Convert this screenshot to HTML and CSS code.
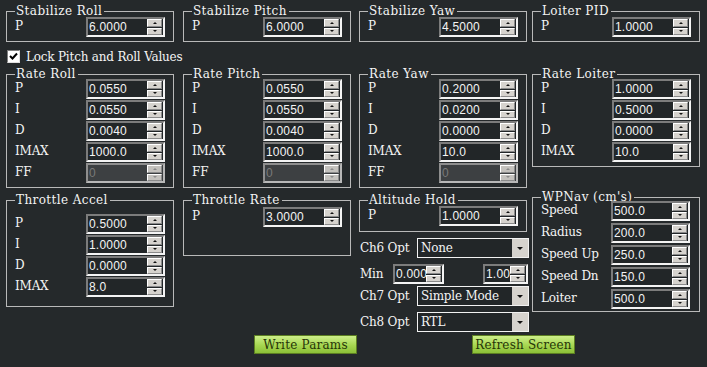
FILE: index.html
```html
<!DOCTYPE html>
<html lang="en">
<head>
    <meta charset="UTF-8">
    <title>Arducopter Config</title>
    <link rel="stylesheet" href="styles.css">
</head>
<body>
    <div class="panel">
        <!-- stabilize row -->
        <fieldset class="grp top">
            <legend>Stabilize Roll</legend>
            <div class="row"><span class="lbl">P</span><div class="spin"><span class="val">6.0000</span><span class="btns"><i class="up"></i><i class="dn"></i></span></div></div>
        </fieldset>
        <fieldset class="grp top">
            <legend>Stabilize Pitch</legend>
            <div class="row"><span class="lbl">P</span><div class="spin"><span class="val">6.0000</span><span class="btns"><i class="up"></i><i class="dn"></i></span></div></div>
        </fieldset>
        <fieldset class="grp top">
            <legend>Stabilize Yaw</legend>
            <div class="row"><span class="lbl">P</span><div class="spin"><span class="val">4.5000</span><span class="btns"><i class="up"></i><i class="dn"></i></span></div></div>
        </fieldset>
        <fieldset class="grp top">
            <legend>Loiter PID</legend>
            <div class="row"><span class="lbl">P</span><div class="spin"><span class="val">1.0000</span><span class="btns"><i class="up"></i><i class="dn"></i></span></div></div>
        </fieldset>

        <label class="lock"><span class="check"><svg width="9" height="9" viewBox="0 0 9 9"><path d="M1 4 L3.5 6.5 L8 1.5" fill="none" stroke="#000" stroke-width="2"/></svg></span>Lock Pitch and Roll Values</label>

        <!-- rate row -->
        <fieldset class="grp rate">
            <legend>Rate Roll</legend>
            <div class="row"><span class="lbl">P</span><div class="spin"><span class="val">0.0550</span><span class="btns"><i class="up"></i><i class="dn"></i></span></div></div>
            <div class="row"><span class="lbl">I</span><div class="spin"><span class="val">0.0550</span><span class="btns"><i class="up"></i><i class="dn"></i></span></div></div>
            <div class="row"><span class="lbl">D</span><div class="spin"><span class="val">0.0040</span><span class="btns"><i class="up"></i><i class="dn"></i></span></div></div>
            <div class="row"><span class="lbl">IMAX</span><div class="spin"><span class="val">1000.0</span><span class="btns"><i class="up"></i><i class="dn"></i></span></div></div>
            <div class="row ff"><span class="lbl">FF</span><div class="spin off"><span class="val">0</span><span class="btns"><i class="up"></i><i class="dn"></i></span></div></div>
        </fieldset>
        <fieldset class="grp rate">
            <legend>Rate Pitch</legend>
            <div class="row"><span class="lbl">P</span><div class="spin"><span class="val">0.0550</span><span class="btns"><i class="up"></i><i class="dn"></i></span></div></div>
            <div class="row"><span class="lbl">I</span><div class="spin"><span class="val">0.0550</span><span class="btns"><i class="up"></i><i class="dn"></i></span></div></div>
            <div class="row"><span class="lbl">D</span><div class="spin"><span class="val">0.0040</span><span class="btns"><i class="up"></i><i class="dn"></i></span></div></div>
            <div class="row"><span class="lbl">IMAX</span><div class="spin"><span class="val">1000.0</span><span class="btns"><i class="up"></i><i class="dn"></i></span></div></div>
            <div class="row ff"><span class="lbl">FF</span><div class="spin off"><span class="val">0</span><span class="btns"><i class="up"></i><i class="dn"></i></span></div></div>
        </fieldset>
        <fieldset class="grp rate">
            <legend>Rate Yaw</legend>
            <div class="row"><span class="lbl">P</span><div class="spin"><span class="val">0.2000</span><span class="btns"><i class="up"></i><i class="dn"></i></span></div></div>
            <div class="row"><span class="lbl">I</span><div class="spin"><span class="val">0.0200</span><span class="btns"><i class="up"></i><i class="dn"></i></span></div></div>
            <div class="row"><span class="lbl">D</span><div class="spin"><span class="val">0.0000</span><span class="btns"><i class="up"></i><i class="dn"></i></span></div></div>
            <div class="row"><span class="lbl">IMAX</span><div class="spin"><span class="val">10.0</span><span class="btns"><i class="up"></i><i class="dn"></i></span></div></div>
            <div class="row ff"><span class="lbl">FF</span><div class="spin off"><span class="val">0</span><span class="btns"><i class="up"></i><i class="dn"></i></span></div></div>
        </fieldset>
        <fieldset class="grp rate">
            <legend>Rate Loiter</legend>
            <div class="row"><span class="lbl">P</span><div class="spin"><span class="val">1.0000</span><span class="btns"><i class="up"></i><i class="dn"></i></span></div></div>
            <div class="row"><span class="lbl">I</span><div class="spin"><span class="val">0.5000</span><span class="btns"><i class="up"></i><i class="dn"></i></span></div></div>
            <div class="row"><span class="lbl">D</span><div class="spin"><span class="val">0.0000</span><span class="btns"><i class="up"></i><i class="dn"></i></span></div></div>
            <div class="row"><span class="lbl">IMAX</span><div class="spin"><span class="val">10.0</span><span class="btns"><i class="up"></i><i class="dn"></i></span></div></div>
        </fieldset>

        <!-- lower row -->
        <fieldset class="grp accel">
            <legend>Throttle Accel</legend>
            <div class="row"><span class="lbl">P</span><div class="spin"><span class="val">0.5000</span><span class="btns"><i class="up"></i><i class="dn"></i></span></div></div>
            <div class="row"><span class="lbl">I</span><div class="spin"><span class="val">1.0000</span><span class="btns"><i class="up"></i><i class="dn"></i></span></div></div>
            <div class="row"><span class="lbl">D</span><div class="spin"><span class="val">0.0000</span><span class="btns"><i class="up"></i><i class="dn"></i></span></div></div>
            <div class="row"><span class="lbl">IMAX</span><div class="spin"><span class="val">8.0</span><span class="btns"><i class="up"></i><i class="dn"></i></span></div></div>
        </fieldset>
        <fieldset class="grp thr-rate">
            <legend>Throttle Rate</legend>
            <div class="row"><span class="lbl">P</span><div class="spin"><span class="val">3.0000</span><span class="btns"><i class="up"></i><i class="dn"></i></span></div></div>
        </fieldset>
        <div class="col3">
            <fieldset class="grp alt">
                <legend>Altitude Hold</legend>
                <div class="row"><span class="lbl">P</span><div class="spin"><span class="val">1.0000</span><span class="btns"><i class="up"></i><i class="dn"></i></span></div></div>
            </fieldset>
            <div class="opt ch6"><span class="olbl">Ch6 Opt</span><div class="combo"><span class="ctext">None</span><span class="drop"><i></i></span></div></div>
            <div class="opt min"><span class="olbl short">Min</span>
                <div class="spin sm"><span class="val">0.000</span><span class="btns"><i class="up"></i><i class="dn"></i></span></div>
                <div class="spin sm2"><span class="val">1.000</span><span class="btns"><i class="up"></i><i class="dn"></i></span></div>
            </div>
            <div class="opt ch7"><span class="olbl">Ch7 Opt</span><div class="combo"><span class="ctext">Simple Mode</span><span class="drop"><i></i></span></div></div>
            <div class="opt ch8"><span class="olbl">Ch8 Opt</span><div class="combo"><span class="ctext">RTL</span><span class="drop"><i></i></span></div></div>
        </div>
        <fieldset class="grp wpnav">
            <legend>WPNav (cm's)</legend>
            <div class="row"><span class="lbl">Speed</span><div class="spin"><span class="val">500.0</span><span class="btns"><i class="up"></i><i class="dn"></i></span></div></div>
            <div class="row"><span class="lbl">Radius</span><div class="spin"><span class="val">200.0</span><span class="btns"><i class="up"></i><i class="dn"></i></span></div></div>
            <div class="row"><span class="lbl">Speed Up</span><div class="spin"><span class="val">250.0</span><span class="btns"><i class="up"></i><i class="dn"></i></span></div></div>
            <div class="row"><span class="lbl">Speed Dn</span><div class="spin"><span class="val">150.0</span><span class="btns"><i class="up"></i><i class="dn"></i></span></div></div>
            <div class="row"><span class="lbl">Loiter</span><div class="spin"><span class="val">500.0</span><span class="btns"><i class="up"></i><i class="dn"></i></span></div></div>
        </fieldset>

        <div class="actions">
            <button class="btn">Write Params</button>
            <button class="btn">Refresh Screen</button>
        </div>
    </div>
</body>
</html>
```

FILE: styles.css
```css
body {
    margin: 0;
    background-color: #25292b;
    color: #f4f4f4;
    font-family: "DejaVu Serif", "Liberation Serif", serif;
    font-size: 12px;
    letter-spacing: -0.2px;
}

.panel {
    display: grid;
    grid-template-columns: 177px 176px 173px 168px;
    align-items: start;
    padding: 6px 0 0 6px;
}

/* group boxes */
.grp {
    margin: 0;
    width: 168px;
    box-sizing: border-box;
    border: 1px solid #b9b9b9;
    padding: 0 8px 4px;
    min-width: 0;
}

.grp legend {
    padding: 0 2px 0 1px;
    line-height: 10px;
    height: 10px;
    letter-spacing: 0.4px;
}

.top {
    padding-top: 1px;
}

.rate .row + .row {
    margin-top: 1px;
}

.rate .ff {
    margin-top: 4px;
}

.accel {
    margin-top: 7px;
    padding-top: 9px;
    padding-bottom: 9px;
}

.accel .row + .row {
    margin-top: 1px;
}

.thr-rate {
    margin-top: 7px;
    padding-top: 2px;
    padding-bottom: 28px;
}

.col3 {
    margin-top: 7px;
}

.alt {
    padding-top: 1px;
    padding-bottom: 5px;
}

.wpnav {
    margin-top: 4px;
    padding-bottom: 2px;
}

.wpnav .row:first-of-type {
    margin-top: -1px;
}

.wpnav .row + .row {
    margin-top: 2px;
}

.row {
    display: flex;
    align-items: center;
    height: 20px;
}

.lbl {
    width: 71px;
    flex: none;
    white-space: nowrap;
    margin-top: -2px;
}

.wpnav .lbl {
    width: 70px;
}

/* spin boxes */
.spin {
    display: flex;
    width: 79px;
    height: 20px;
    box-sizing: border-box;
    border: 2px solid;
    border-color: #7c7c7c #f4f4f4 #f4f4f4 #7c7c7c;
    background-color: #222628;
}

.spin .val {
    flex: 1;
    overflow: hidden;
    white-space: nowrap;
    padding-left: 1px;
    font-family: "Liberation Sans", Arial, sans-serif;
    font-size: 12px;
    letter-spacing: 0.2px;
    line-height: 16px;
    color: #f4f4f4;
}

.btns {
    display: flex;
    flex-direction: column;
    gap: 1px;
    width: 15px;
    flex: none;
    padding: 0 1px 0 0;
}

.btns i {
    flex: 1;
    display: flex;
    align-items: center;
    justify-content: center;
    background-color: #d6d3ce;
    border: 1px solid;
    border-color: #ffffff #8a8a8a #8a8a8a #ffffff;
}

.btns i::after {
    content: "";
    border-left: 2px solid transparent;
    border-right: 2px solid transparent;
}

.btns .up::after {
    border-bottom: 2px solid #111;
}

.btns .dn::after {
    border-top: 2px solid #111;
}

.spin.off {
    border-color: #8e8e8e #b8b8b8 #b8b8b8 #8e8e8e;
    background-color: #3d4042;
}

.spin.off .val {
    color: #7a7a7a;
}

.spin.off .btns i {
    background-color: #c4c2be;
}

.spin.off .btns i::after {
    border-top-color: #8a8a8a;
    border-bottom-color: #8a8a8a;
}

/* lock checkbox */
.lock {
    grid-column: 1 / -1;
    display: flex;
    align-items: center;
    gap: 6px;
    height: 13px;
    margin: 8px 0 6px 1px;
}

.check {
    width: 13px;
    height: 13px;
    box-sizing: border-box;
    display: flex;
    align-items: center;
    justify-content: center;
    background-color: #ffffff;
    border: 1px solid;
    border-color: #808080 #e0e0e0 #e0e0e0 #808080;
}

/* channel options */
.opt {
    display: flex;
    align-items: center;
    height: 20px;
}

.ch6 {
    margin-top: 6px;
}

.min {
    margin-top: 6px;
}

.ch7 {
    margin-top: 2px;
}

.ch8 {
    margin-top: 6px;
}

.olbl {
    width: 57px;
    padding-left: 1px;
    flex: none;
}

.olbl.short {
    width: 33px;
}

.spin.sm {
    width: 51px;
}

.spin.sm2 {
    width: 45px;
    margin-left: 39px;
}

.combo {
    display: flex;
    width: 112px;
    height: 20px;
    box-sizing: border-box;
    border: 1px solid #f2f2f2;
    background-color: #222628;
}

.ctext {
    flex: 1;
    padding-left: 3px;
    line-height: 18px;
}

.drop {
    width: 16px;
    display: flex;
    align-items: center;
    justify-content: center;
    background-color: #d6d3ce;
}

.drop i {
    border-left: 3px solid transparent;
    border-right: 3px solid transparent;
    border-top: 3px solid #111;
}

/* buttons */
.actions {
    grid-column: 1 / -1;
    display: flex;
    gap: 115px;
    margin-top: 3px;
    padding-left: 248px;
}

.btn {
    width: 103px;
    height: 19px;
    padding: 0;
    border: 1px solid #5d7f22;
    background: linear-gradient(#cdee8a, #a6d650 55%, #8cc038);
    color: #263508;
    font-family: "DejaVu Serif", "Liberation Serif", serif;
    font-size: 12px;
    letter-spacing: 0.2px;
}
```
